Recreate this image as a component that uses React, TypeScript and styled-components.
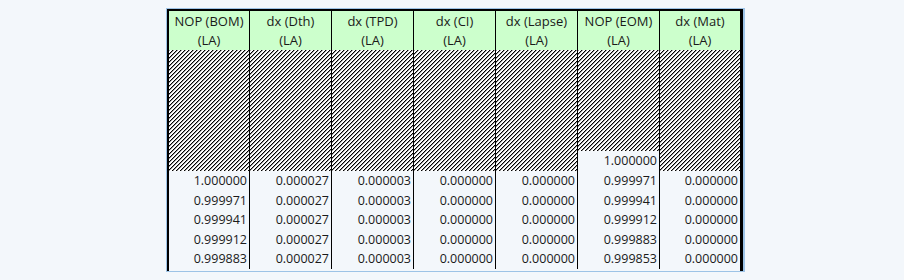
import React from 'react';
import styled, { createGlobalStyle } from 'styled-components';

type Column = {
  title: string;
  values: string[];
  start?: string;
};

const columns: Column[] = [
  { title: 'NOP (BOM)', values: ['1.000000', '0.999971', '0.999941', '0.999912', '0.999883'] },
  { title: 'dx (Dth)', values: Array(5).fill('0.000027') },
  { title: 'dx (TPD)', values: Array(5).fill('0.000003') },
  { title: 'dx (CI)', values: Array(5).fill('0.000000') },
  { title: 'dx (Lapse)', values: Array(5).fill('0.000000') },
  {
    title: 'NOP (EOM)',
    start: '1.000000',
    values: ['0.999971', '0.999941', '0.999912', '0.999883', '0.999853'],
  },
  { title: 'dx (Mat)', values: Array(5).fill('0.000000') },
];

// diagonal "/" fill used for cells with no value
const HatchFill = ({ id }: { id: string }) => (
  <svg width="100%" height="100%" shapeRendering="crispEdges">
    <defs>
      <pattern id={id} width="4" height="4" patternUnits="userSpaceOnUse">
        <rect width="4" height="4" fill="#fff" />
        <rect x="3" y="0" width="1" height="1" fill="#000" />
        <rect x="2" y="1" width="1" height="1" fill="#000" />
        <rect x="1" y="2" width="1" height="1" fill="#000" />
        <rect x="0" y="3" width="1" height="1" fill="#000" />
        <rect x="0" y="0" width="1" height="1" fill="#9a9a9a" />
        <rect x="3" y="1" width="1" height="1" fill="#9a9a9a" />
        <rect x="2" y="2" width="1" height="1" fill="#9a9a9a" />
        <rect x="1" y="3" width="1" height="1" fill="#9a9a9a" />
      </pattern>
    </defs>
    <rect width="100%" height="100%" fill={`url(#${id})`} />
  </svg>
);

const App = () => {
  return (
    <Page>
      <GlobalStyle />
      <Frame>
        <Sheet>
          {columns.map((col, i) => (
            <Col key={col.title} $first={i === 0} $last={i === columns.length - 1}>
              <HeaderCell>
                {col.title}
                <br />
                (LA)
              </HeaderCell>
              <Hatch $short={!!col.start}>
                <HatchFill id={`hatch-${i}`} />
              </Hatch>
              {col.start && <StartCell>{col.start}</StartCell>}
              {col.values.map((v, j) => (
                <DataCell key={j}>{v}</DataCell>
              ))}
            </Col>
          ))}
        </Sheet>
      </Frame>
    </Page>
  );
};

const GlobalStyle = createGlobalStyle`
  html, body {
    margin: 0;
    padding: 0;
    background: #f3f7fb;
  }
`;

const Page = styled.div`
  display: flex;
  padding: 8px 0 0 166px;
  font-family: "Open Sans", "Liberation Sans", sans-serif;
  font-size: 12.5px;
  color: #1a1a1a;
`;

const Frame = styled.div`
  border: 1px solid #9dc3e6;
  border-right-width: 2px;
`;

const Sheet = styled.div`
  display: flex;
  border-top: 2px solid #000;
  border-left: 2px solid #000;
  border-right: 3px solid #000;
  padding-bottom: 2px;
  background: #f3f7fb;
`;

const Col = styled.div<{ $first: boolean; $last: boolean }>`
  display: flex;
  flex-direction: column;
  width: ${(p) => (p.$first || p.$last ? 80 : 81)}px;
  border-left: ${(p) => (p.$first ? 'none' : '1px solid #000')};
`;

const HeaderCell = styled.div`
  height: 39px;
  box-sizing: border-box;
  padding-top: 1px;
  font-size: 13px;
  line-height: 19px;
  text-align: center;
  white-space: nowrap;
  background: #ccffcc;
`;

const Hatch = styled.div<{ $short: boolean }>`
  display: flex;
  height: ${(p) => (p.$short ? 101 : 121)}px;
  overflow: hidden;
`;

const DataCell = styled.div`
  height: 19.5px;
  line-height: 19.5px;
  padding-right: 2px;
  text-align: right;
`;

const StartCell = styled(DataCell)`
  height: 20px;
  line-height: 20px;
`;

export default App;
